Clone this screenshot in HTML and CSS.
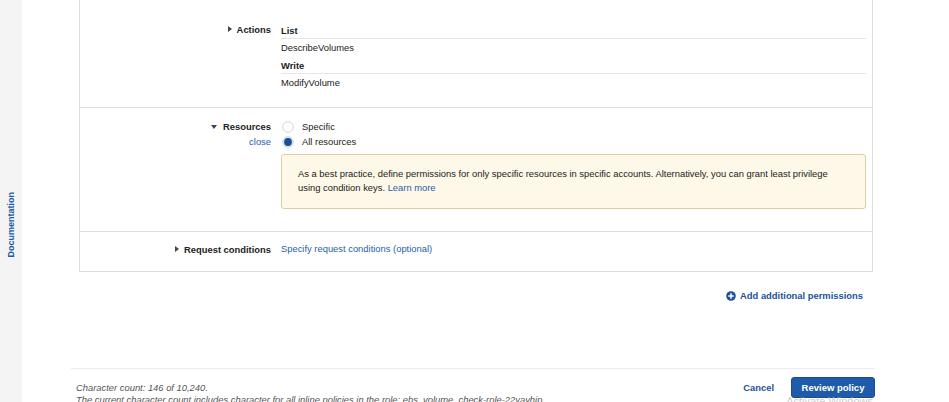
FILE: index.html
```html
<!DOCTYPE html>
<html>
<head>
<meta charset="utf-8">
<link rel="stylesheet" href="styles.css">
</head>
<body>
<div class="page">
  <aside class="sidebar"><span class="doc">Documentation</span></aside>
  <main class="main">
    <section class="card">
      <div class="row row-actions">
        <div class="label"><span class="tri tri-right"></span><span class="label-text">Actions</span></div>
        <div class="content">
          <div class="group-head">List</div>
          <div class="group-item">DescribeVolumes</div>
          <div class="group-head">Write</div>
          <div class="group-item">ModifyVolume</div>
        </div>
      </div>
      <div class="row row-resources">
        <div class="label label-stack">
          <div class="label-line"><span class="tri tri-down"></span><span class="label-text">Resources</span></div>
          <a class="link close">close</a>
        </div>
        <div class="content">
          <div class="radio-line">
            <svg class="radio" width="12" height="12" viewBox="0 0 12 12"><circle cx="6" cy="6" r="5.3" fill="#fff" stroke="#c9c9c9" stroke-width="0.8"/></svg>
            <span>Specific</span>
          </div>
          <div class="radio-line">
            <svg class="radio" width="12" height="12" viewBox="0 0 12 12"><circle cx="6" cy="6" r="5.4" fill="#dfe7f3" stroke="#b9c6d8" stroke-width="0.6"/><circle cx="6" cy="6" r="3.9" fill="#1b4f95"/></svg>
            <span>All resources</span>
          </div>
          <div class="alert">As a best practice, define permissions for only specific resources in specific accounts. Alternatively, you can grant least privilege using condition keys. <a class="link">Learn more</a></div>
        </div>
      </div>
      <div class="row row-conditions">
        <div class="label"><span class="tri tri-right"></span><span class="label-text">Request conditions</span></div>
        <div class="content"><a class="link">Specify request conditions (optional)</a></div>
      </div>
    </section>
    <div class="add-row">
      <a class="add-link">
        <svg width="10" height="10" viewBox="0 0 10 10"><circle cx="5" cy="5" r="4.8" fill="#1d5396"/><path d="M5 2.3v5.4M2.3 5h5.4" stroke="#fff" stroke-width="1.5"/></svg>
        <span>Add additional permissions</span>
      </a>
    </div>
    <footer class="footer">
      <div class="count">
        <div>Character count: 146 of 10,240.</div>
        <div>The current character count includes character for all inline policies in the role: ebs_volume_check-role-22yayhip.</div>
      </div>
      <div class="actions">
        <a class="cancel">Cancel</a>
        <button class="primary">Review policy</button>
      </div>
      <span class="watermark">Activate Windows</span>
    </footer>
  </main>
</div>
</body>
</html>
```

FILE: styles.css
```css
* { box-sizing: border-box; }
html, body { margin: 0; padding: 0; background: #fff; }
body {
  font-family: "Liberation Sans", Arial, sans-serif;
  font-size: 9.4px;
  color: #222;
  width: 949px;
  height: 402px;
  overflow: hidden;
}
.page { display: flex; height: 402px; }
.sidebar {
  width: 22px;
  flex: none;
  background: #f4f4f5;
  display: flex;
  align-items: center;
  justify-content: center;
  padding-top: 48px;
}
.doc {
  writing-mode: vertical-rl;
  transform: rotate(180deg);
  font-weight: bold;
  font-size: 9px;
  color: #1a5aa3;
}
.main {
  margin-left: 49px;
  width: 804px;
  display: flex;
  flex-direction: column;
  position: relative;
}
.card {
  margin-left: 8px;
  width: 794px;
  border: 1px solid #dcdcdc;
  border-top: none;
}
.row {
  display: grid;
  grid-template-columns: 191px 1fr;
  column-gap: 10px;
  padding-right: 6px;
  align-items: start;
}
.row + .row { border-top: 1px solid #dedede; }
.label { display: flex; justify-content: flex-end; align-items: center; height: 14px; }
.label-text { font-weight: bold; color: #222; }
.tri { display: inline-block; width: 0; height: 0; margin-right: 5px; }
.tri-right { border-top: 3px solid transparent; border-bottom: 3px solid transparent; border-left: 4px solid #444; }
.tri-down { border-left: 3px solid transparent; border-right: 3px solid transparent; border-top: 4px solid #444; margin-right: 6px; }
.link { color: #1f5fa8; text-decoration: none; }

.row-actions { padding-top: 22px; padding-bottom: 15px; }
.group-head { font-weight: bold; height: 17px; line-height: 17px; border-bottom: 1px solid #e6e6e6; }
.group-item { height: 18px; line-height: 18px; }

.row-resources { padding-top: 11px; padding-bottom: 22px; }
.label-stack { flex-direction: column; align-items: flex-end; justify-content: flex-start; height: auto; }
.label-line { display: flex; align-items: center; height: 15px; }
.close { line-height: 15px; height: 15px; }
.radio-line { display: flex; align-items: center; height: 15px; }
.radio { margin-left: 1px; margin-right: 8px; }
.alert {
  margin-top: 5px;
  background: #fdf8e7;
  border: 1px solid #e2cba4;
  border-radius: 3px;
  padding: 12px 24px 13px 16px;
  line-height: 14px;
  height: 55px;
}

.row-conditions { padding-top: 10px; padding-bottom: 15px; }
.row-conditions .content { line-height: 14px; }

.add-row {
  display: flex;
  justify-content: flex-end;
  padding-right: 12px;
  margin-top: 18px;
}
.add-link {
  display: flex;
  align-items: center;
  gap: 4px;
  font-weight: bold;
  color: #1d5396;
  line-height: 12px;
}
.footer {
  margin-top: 66px;
  border-top: 1.5px solid #ebebeb;
  display: flex;
  justify-content: space-between;
  align-items: flex-start;
  padding-top: 8px;
}
.count {
  padding-left: 5px;
  font-style: italic;
  color: #555;
  line-height: 12px;
  padding-top: 5px;
  white-space: nowrap;
}
.actions { display: flex; align-items: center; gap: 17px; }
.cancel { font-weight: bold; color: #1d5396; }
.primary {
  font-family: "Liberation Sans", Arial, sans-serif;
  font-size: 9.5px;
  font-weight: bold;
  color: #fff;
  background: #1e5cab;
  border: 1px solid #194d8f;
  border-radius: 3px;
  width: 84px;
  height: 21px;
  padding: 0;
}
.watermark {
  position: absolute;
  right: 2px;
  bottom: -5px;
  font-size: 11px;
  color: rgba(190,190,190,0.8);
}
```
